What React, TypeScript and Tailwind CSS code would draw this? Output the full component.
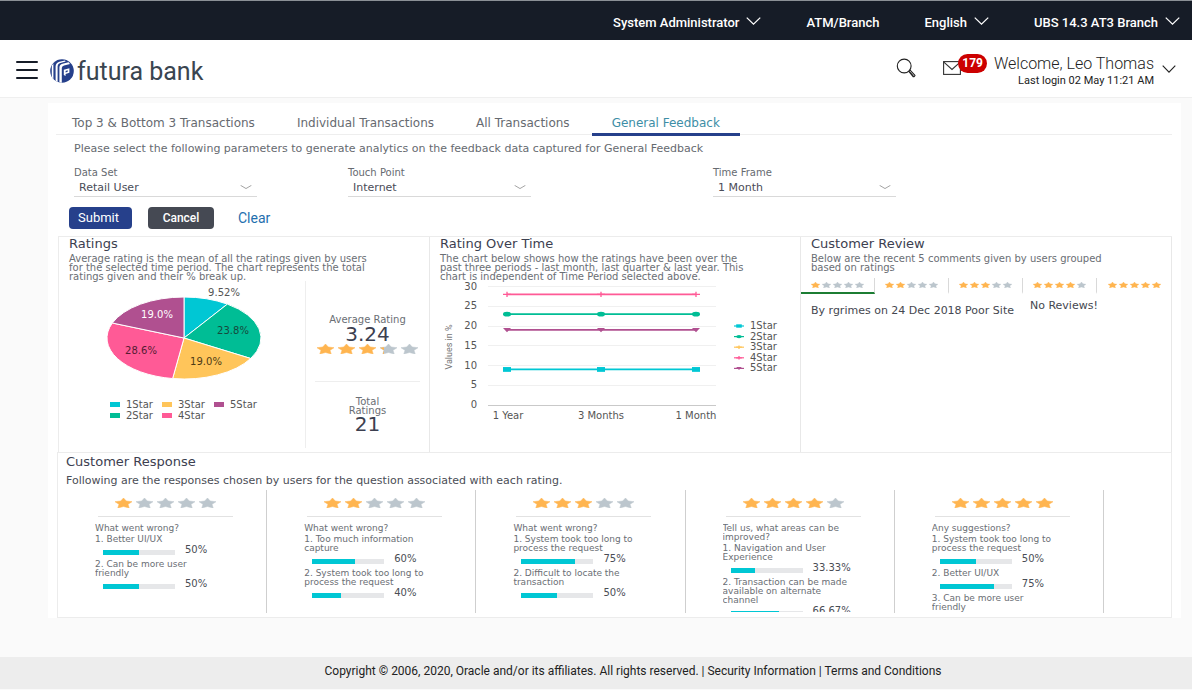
import { useState } from "react";

const SERIES = [
  { name: "1Star", color: "#00c7d4", share: 9.52 },
  { name: "2Star", color: "#00bd95", share: 23.8 },
  { name: "3Star", color: "#ffc55a", share: 19.04 },
  { name: "4Star", color: "#ff5a96", share: 28.6 },
  { name: "5Star", color: "#b05090", share: 19.04 },
];

function Chevron({ className }: { className: string }) {
  return (
    <svg viewBox="0 0 16 9" preserveAspectRatio="none" className={className} fill="none" stroke="currentColor" strokeWidth="1.3" aria-hidden="true">
      <path d="M0.8 0.8 L8 8 L15.2 0.8" />
    </svg>
  );
}

const STAR = "8.5,0 11.3,3 17,3.7 13,6.3 14.2,10 8.5,8.5 2.8,10 4,6.3 0,3.7 5.7,3";

function Stars({ value, small = false }: { value: number; small?: boolean }) {
  return (
    <span className={small ? "flex gap-[2px]" : "flex gap-1"} role="img" aria-label={`${value} of 5 stars`}>
      {[0, 1, 2, 3, 4].map((i) => {
        const part = Math.max(0, Math.min(1, value - i));
        return (
          <svg key={i} viewBox="0 0 17 10" preserveAspectRatio="none" className={small ? "h-[6px] w-[9px]" : "h-[10px] w-[17px]"}>
            {part < 1 && <polygon points={STAR} fill="#bcc6cd" stroke="#bcc6cd" strokeWidth="0.5" />}
            {part === 1 && <polygon points={STAR} fill="#ffb550" stroke="#ffb550" strokeWidth="0.5" />}
            {part > 0 && part < 1 && (
              <svg x="0" y="0" width={17 * part} height="10" viewBox={`0 0 ${17 * part} 10`}>
                <polygon points={STAR} fill="#ffb550" />
              </svg>
            )}
          </svg>
        );
      })}
    </span>
  );
}

function TopBar() {
  return (
    <div className="flex h-10 items-center justify-end border-t border-[#8b9096] bg-[#161c27] pr-3 pt-1 text-[13px] font-medium text-white">
      <button className="mr-[45px] flex items-center gap-[7px]">
        System Administrator <Chevron className="mb-1 h-2 w-[15px]" />
      </button>
      <button className="mr-[45px]">ATM/Branch</button>
      <button className="mr-[45px] flex items-center gap-[7px]">
        English <Chevron className="mb-1 h-2 w-[15px]" />
      </button>
      <button className="flex items-center gap-[7px]">
        UBS 14.3 AT3 Branch <Chevron className="mb-1 h-2 w-[15px]" />
      </button>
    </div>
  );
}

function Logo() {
  return (
    <svg viewBox="0 0 24 24" className="size-6" aria-hidden="true">
      <defs>
        <clipPath id="disc">
          <circle cx="12" cy="12" r="11.8" />
        </clipPath>
      </defs>
      <g clipPath="url(#disc)">
        <rect width="24" height="24" fill="#26408b" />
        <path d="M1.8 24 V6.5 L3.4 4.5 V24 Z" fill="#fff" />
        <path d="M5.6 24 V7.2 Q5.8 4 9.4 2.8 L15 1.4 L15.6 2.4 L10.4 3.9 Q7.6 4.8 7.6 7.6 V24 Z" fill="#fff" />
        <path d="M9.4 24 V8.4 Q9.6 5.6 12.6 4.8 L18.6 3.3 L20 5 L14 6.6 Q11.8 7.2 11.8 9 V24 Z" fill="#fff" />
        <path d="M13.8 16 V10.8 L19.4 9.2 V13.8 L15.6 15 V17 Z" fill="#fff" />
        <path d="M15.6 11.9 L17.7 11.3 V12.7 L15.6 13.4 Z" fill="#26408b" />
      </g>
    </svg>
  );
}

function Header() {
  return (
    <header className="flex h-[58px] items-center border-b border-[#efefef] bg-white pl-4 pr-4">
      <button aria-label="Menu" className="mr-3 flex w-[22px] flex-col gap-[6px] pt-[3px]">
        <span className="h-[2px] rounded-full bg-[#161c27]" />
        <span className="h-[2px] rounded-full bg-[#161c27]" />
        <span className="h-[2px] rounded-full bg-[#161c27]" />
      </button>
      <a href="#" className="flex items-center gap-[3px] pt-1 text-[25px] leading-8 text-[#3a4550]">
        <Logo />
        <span className="pt-[3px]">futura bank</span>
      </a>
      <div className="ml-auto flex items-center">
        <button aria-label="Search" className="mb-[2px] mr-[27px]">
          <svg viewBox="0 0 20 20" className="size-5" fill="none" stroke="#222" strokeWidth="1.1">
            <circle cx="8.2" cy="8" r="6.9" />
            <path d="M12.8 13.4 L14.4 12.4 L19 17.4 Q18.6 19 17 18.6 Z M14.4 14.6 L17.4 18" />
          </svg>
        </button>
        <button aria-label="Messages, 179 unread" className="relative mb-1 mr-[7px] h-7 w-[44px]">
          <svg viewBox="0 0 18 14" className="absolute left-0 top-2 h-[14px] w-[18px]" fill="none" stroke="#333" strokeWidth="1.1">
            <rect x="0.6" y="0.6" width="16.8" height="12.8" />
            <path d="M0.6 0.8 L9 8.4 L17.4 0.8" />
          </svg>
          <span className="absolute right-0 top-px rounded-full bg-[#cc0000] px-1 text-xs font-bold leading-[19px] text-white">179</span>
        </button>
        <button className="flex items-center gap-2 pt-1 text-right">
          <span>
            <span className="block text-base font-light leading-5 text-[#222]">Welcome, Leo Thomas</span>
            <span className="block text-[11px] leading-[14px] text-[#222]">Last login 02 May 11:21 AM</span>
          </span>
          <Chevron className="mb-1 h-2 w-[14px] text-[#222]" />
        </button>
      </div>
    </header>
  );
}

const TABS = ["Top 3 & Bottom 3 Transactions", "Individual Transactions", "All Transactions", "General Feedback"];

function Tabs() {
  const [active, setActive] = useState(3);
  return (
    <nav className="ml-2 mr-[9px] flex gap-[42px] border-b border-[#eeeeee] pl-4 pt-[11px]">
      {TABS.map((t, i) => (
        <button
          key={t}
          onClick={() => setActive(i)}
          className={
            i === active
              ? "-mx-5 -mb-[2px] h-[22px] border-b-[3px] border-[#26408b] px-5 text-xs leading-[19px] text-[#3d8ea6]"
              : "-mb-[2px] h-[22px] border-b-[3px] border-transparent text-xs leading-[19px] text-[#666a70]"
          }
        >
          {t}
        </button>
      ))}
    </nav>
  );
}

function Picker({ id, label, options }: { id: string; label: string; options: string[] }) {
  return (
    <div className="w-[183px]">
      <label htmlFor={id} className="block text-[10px] leading-3 text-[#666a70]">
        {label}
      </label>
      <div className="relative">
        <select id={id} className="block h-[18px] w-full appearance-none border-b border-[#d9d9d9] bg-transparent pl-[5px] text-[11px] leading-4 text-[#4a4c58]">
          {options.map((o) => (
            <option key={o}>{o}</option>
          ))}
        </select>
        <Chevron className="pointer-events-none absolute right-[5px] top-[6px] h-1 w-3 text-[#888]" />
      </div>
    </div>
  );
}

function Filters() {
  return (
    <form onSubmit={(e) => e.preventDefault()}>
      <p className="pl-[26px] pt-2 text-[11px] leading-3 text-[#666a70]">
        Please select the following parameters to generate analytics on the feedback data captured for General Feedback
      </p>
      <div className="flex pl-[26px] pt-3">
        <div className="w-[274px]">
          <Picker id="dataset" label="Data Set" options={["Retail User", "Corporate User"]} />
        </div>
        <div className="w-[365px]">
          <Picker id="touch" label="Touch Point" options={["Internet", "Mobile"]} />
        </div>
        <Picker id="time" label="Time Frame" options={["1 Month", "3 Months", "1 Year"]} />
      </div>
      <div className="flex items-center pb-[7px] pl-[21px] pt-[10px] font-['Roboto',sans-serif]">
        <button type="submit" className="mr-4 h-[22px] w-[63px] rounded bg-[#26408b] pr-1 text-[13px] leading-5 text-white">
          Submit
        </button>
        <button type="button" className="mr-6 h-[22px] w-[66px] rounded bg-[#454953] text-xs font-medium leading-5 text-white">
          Cancel
        </button>
        <button type="reset" className="text-sm leading-5 text-[#1f6fae]">
          Clear
        </button>
      </div>
    </form>
  );
}

function CardIntro({ title, children }: { title: string; children: string }) {
  return (
    <div className="pl-[10px]">
      <h2 className="text-[13px] leading-[13px] text-[#3c4050]">{title}</h2>
      <p className="w-[308px] pt-1 text-[10px] leading-[9px] text-[#6a6e74]">{children}</p>
    </div>
  );
}

function Pie() {
  const cx = 125;
  const cy = 57;
  const rx = 77;
  const ry = 41;
  let start = 0;
  const at = (f: number) => {
    const a = f * 2 * Math.PI;
    return `${(cx + rx * Math.sin(a)).toFixed(2)} ${(cy - ry * Math.cos(a)).toFixed(2)}`;
  };
  const slices = SERIES.map((s) => {
    const end = start + s.share / 100;
    const d = `M${cx} ${cy} L${at(start)} A${rx} ${ry} 0 0 1 ${at(end)} Z`;
    start = end;
    return <path key={s.name} d={d} fill={s.color} stroke="#fff" strokeWidth="1" />;
  });
  return (
    <svg viewBox="0 0 246 104" className="h-[104px] w-[246px]" fontSize="10" textAnchor="middle" role="img" aria-label="Share of each rating">
      {slices}
      <text x="165" y="15" fill="#555">9.52%</text>
      <text x="174" y="53" fill="#164a3d">23.8%</text>
      <text x="147" y="84" fill="#4d3b16">19.0%</text>
      <text x="82" y="73" fill="#561c33">28.6%</text>
      <text x="98" y="37" fill="#fff">19.0%</text>
    </svg>
  );
}

function RatingsCard() {
  return (
    <section className="flex flex-col border-r border-[#e8e8e8]">
      <CardIntro title="Ratings">
        Average rating is the mean of all the ratings given by users for the selected time period. The chart represents the total ratings given and their % break up.
      </CardIntro>
      <div className="flex flex-1 pb-1">
        <div className="border-r border-[#eeeeee]">
          <Pie />
          <ul className="ml-[51px] grid w-[156px] grid-flow-col grid-cols-3 grid-rows-2 pt-[14px] text-[10px] leading-[11px] text-[#555]">
            {SERIES.map((s) => (
              <li key={s.name} className="flex items-center gap-[6px]">
                <svg viewBox="0 0 10 5" className="h-[5px] w-[10px]">
                  <rect width="10" height="5" fill={s.color} />
                </svg>
                {s.name}
              </li>
            ))}
          </ul>
        </div>
        <div className="flex flex-1 flex-col items-center text-center text-[#3c4050]">
          <p className="pt-[34px] text-[10px] leading-[10px] text-[#6a6e74]">Average Rating</p>
          <p className="pb-px text-xl leading-[18px]">3.24</p>
          <Stars value={3.24} />
          <hr className="mt-[27px] w-[105px] border-[#eeeeee]" />
          <p className="w-[50px] pt-[15px] text-[10px] leading-[9px] text-[#6a6e74]">Total Ratings</p>
          <p className="text-xl leading-[18px]">21</p>
        </div>
      </div>
    </section>
  );
}

function Marker({ index, x, y, s = 1 }: { index: number; x: number; y: number; s?: number }) {
  const c = SERIES[index].color;
  if (index === 0) return <rect x={x - 4 * s} y={y - 2.4 * s} width={8 * s} height={4.8 * s} fill={c} />;
  if (index === 1) return <ellipse cx={x} cy={y} rx={4 * s} ry={2.4 * s} fill={c} />;
  if (index === 4) return <path d={`M${x - 4 * s} ${y - 2 * s} h${8 * s} l${-4 * s} ${4.4 * s} Z`} fill={c} />;
  return <path d={`M${x - 4 * s} ${y} h${8 * s} M${x} ${y - 2.6 * s} v${5.2 * s}`} stroke={c} strokeWidth="1.3" />;
}

function LineChart() {
  const y = (v: number) => 124 - v * 3.95;
  const xs = [71, 165, 260];
  const lines = [
    { index: 0, v: 9 },
    { index: 1, v: 23 },
    { index: 3, v: 28 },
    { index: 4, v: 19 },
  ];
  return (
    <svg viewBox="0 0 360 146" className="h-[146px] w-[360px]" fontSize="10" fill="#555" role="img" aria-label="Rating over time">
      {[0, 5, 10, 15, 20, 25, 30].map((v) => (
        <g key={v}>
          <path d={`M52 ${Math.floor(y(v)) + 0.5} H280`} stroke={v === 0 ? "#c9c9c9" : "#f0f0f0"} />
          <text x="41" y={y(v) + 3} textAnchor="end">{v}</text>
        </g>
      ))}
      {lines.map(({ index, v }) => (
        <g key={index}>
          <path d={`M71 ${y(v)} H260`} stroke={SERIES[index].color} strokeWidth="1.8" />
          {xs.map((x) => (
            <Marker key={x} index={index} x={x} y={y(v)} />
          ))}
        </g>
      ))}
      <text x="72" y="138" textAnchor="middle">1 Year</text>
      <text x="165" y="138" textAnchor="middle">3 Months</text>
      <text x="260" y="138" textAnchor="middle">1 Month</text>
      <text transform="translate(16 66) rotate(-90)" textAnchor="middle" fontSize="9" className="font-['Roboto',sans-serif]" fill="#777">
        Values in %
      </text>
      {SERIES.map((s, i) => (
        <g key={s.name}>
          <path d={`M298 ${45 + i * 10.6} h10`} stroke={s.color} strokeWidth="1.2" />
          <Marker index={i} x={303} y={45 + i * 10.6} s={0.7} />
          <text x="314" y={48 + i * 10.6}>{s.name}</text>
        </g>
      ))}
    </svg>
  );
}

function OverTimeCard() {
  return (
    <section className="border-r border-[#e8e8e8]">
      <CardIntro title="Rating Over Time">
        The chart below shows how the ratings have been over the past three periods - last month, last quarter & last year. This chart is independent of Time Period selected above.
      </CardIntro>
      <div className="pl-[6px]">
        <LineChart />
      </div>
    </section>
  );
}

function ReviewCard() {
  const [active, setActive] = useState(1);
  return (
    <section className="border-r border-[#e8e8e8]">
      <CardIntro title="Customer Review">
        Below are the recent 5 comments given by users grouped based on ratings
      </CardIntro>
      <div className="grid grid-cols-5 divide-x divide-[#d9d9d9] pt-[6px]">
        {[1, 2, 3, 4, 5].map((n) => (
          <button
            key={n}
            onClick={() => setActive(n)}
            className={
              n === active
                ? "flex h-4 items-center justify-center border-b-2 border-b-[#1c7d33]"
                : "flex h-4 items-center justify-center border-b-2 border-b-transparent"
            }
          >
            <Stars value={n} small />
          </button>
        ))}
      </div>
      <div className="flex gap-4 whitespace-nowrap pl-[10px] pt-[6px] text-[11px] leading-[12px] text-[#45474f]">
        <p className="pt-[5px]">By rgrimes on 24 Dec 2018 Poor Site</p>
        <p>No Reviews!</p>
      </div>
    </section>
  );
}

const RESPONSES = [
  { stars: 1, question: "What went wrong?", items: [["Better UI/UX", 50], ["Can be more user friendly", 50]] },
  { stars: 2, question: "What went wrong?", items: [["Too much information capture", 60], ["System took too long to process the request", 40]] },
  { stars: 3, question: "What went wrong?", items: [["System took too long to process the request", 75], ["Difficult to locate the transaction", 50]] },
  { stars: 4, question: "Tell us, what areas can be improved?", items: [["Navigation and User Experience", 33.33], ["Transaction can be made available on alternate channel", 66.67]] },
  { stars: 5, question: "Any suggestions?", items: [["System took too long to process the request", 50], ["Better UI/UX", 75], ["Can be more user friendly", null]] },
] as { stars: number; question: string; items: [string, number | null][] }[];

function Responses() {
  return (
    <section className="ml-[9px] mr-[9px] border border-[#ececec] pb-1">
      <h2 className="pl-2 pt-[2px] text-[13px] leading-[14px] text-[#3c4050]">Customer Response</h2>
      <p className="pl-2 pt-[6px] text-[11px] leading-3 text-[#4a4d55]">
        Following are the responses chosen by users for the question associated with each rating.
      </p>
      <div className="mt-[3px] grid grid-cols-5 pr-[67px]">
        {RESPONSES.map((r) => (
          <div key={r.stars} className="h-[123px] border-r border-[#cfcfcf] pl-[37px]">
            <div className="h-[122px] w-[146px] overflow-hidden text-[9px] leading-[9px] text-[#6a6e74]">
              <div className="ml-[3px] flex w-[135px] justify-center border-b border-[#e2e2e2] pb-2 pt-2">
                <Stars value={r.stars} />
              </div>
              <p className="w-[128px] pb-[2px] pt-[7px]">{r.question}</p>
              <ol>
                {r.items.map(([text, pct], i) => (
                  <li key={text}>
                    <p className="w-[128px]">
                      {i + 1}. {text}
                    </p>
                    {pct !== null && (
                      <div className="flex h-4 items-start gap-[10px] pl-2">
                        <div className="mt-[6px] h-[5px] w-[72px] bg-[#e6e7e9]">
                          <div className="h-full bg-[#00c7d4]" style={{ width: `${pct}%` }} />
                        </div>
                        <span className="pt-px text-[10px] text-[#4a4d55]">{pct}%</span>
                      </div>
                    )}
                  </li>
                ))}
              </ol>
            </div>
          </div>
        ))}
      </div>
    </section>
  );
}

export default function App() {
  return (
    <div className="flex min-h-screen flex-col bg-[#fafafa] font-['Roboto',sans-serif]">
      <TopBar />
      <Header />
      <main className="ml-12 mr-[11px] mt-[5px] bg-white font-['DejaVu_Sans',sans-serif]">
        <Tabs />
        <Filters />
        <div className="ml-[10px] mr-[9px] grid min-h-[216px] grid-cols-3 border-l border-t border-[#ececec]">
          <RatingsCard />
          <OverTimeCard />
          <ReviewCard />
        </div>
        <Responses />
      </main>
      <footer className="mb-px mt-auto bg-[#ededed] pb-2 pl-[74px] pt-1 text-center text-xs leading-5 text-[#222]">
        Copyright © 2006, 2020, Oracle and/or its affiliates. All rights reserved. | <a href="#">Security Information</a> | <a href="#">Terms and Conditions</a>
      </footer>
    </div>
  );
}
